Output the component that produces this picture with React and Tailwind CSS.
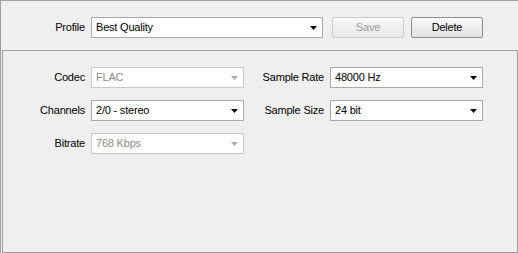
import React from 'react';

function Arrow({ disabled }) {
  return (
    <svg width="7" height="4" viewBox="0 0 7 4" className="shrink-0">
      <path d="M0 0H7L3.5 4Z" fill={disabled ? '#a8a8a8' : '#000'} />
    </svg>
  );
}

function Combo({ value, disabled, width }) {
  return (
    <div
      className={`flex items-center h-[21px] pl-[4px] pr-[5px] border ${
        disabled ? 'border-[#c9c9c9] text-[#8d8d8d]' : 'border-[#a9a9a9] text-black'
      } bg-white ${width}`}
    >
      <span className="flex-1 truncate">{value}</span>
      <Arrow disabled={disabled} />
    </div>
  );
}

function Label({ children, width }) {
  return <div className={`${width} text-right pr-[6px] text-black`}>{children}</div>;
}

export default function App() {
  return (
    <div
      className="w-[518px] h-[253px] bg-[#efefef] border-t border-l border-[#a0a0a0] flex flex-col text-[11px] leading-none tracking-[-0.2px]"
      style={{ fontFamily: '"Liberation Sans", Arial, sans-serif' }}
    >
      <div className="h-[49px] shrink-0 pt-[16px] flex items-start">
        <Label width="w-[90px] h-[21px] flex items-center justify-end">Profile</Label>
        <Combo value="Best Quality" width="w-[232px]" />
        <button className="ml-[9px] w-[72px] h-[21px] rounded-[2px] border border-[#cbcbcb] bg-gradient-to-b from-[#f7f7f7] to-[#e9e9e9] text-[#9d9d9d]">
          Save
        </button>
        <button className="ml-[7px] w-[72px] h-[21px] rounded-[2px] border border-[#8e8e8e] bg-gradient-to-b from-[#fafafa] to-[#e2e2e2] text-black">
          Delete
        </button>
      </div>
      <div className="ml-[1px] flex-1 border border-[#a0a0a0] pt-[16px] flex flex-col gap-[12px]">
        <div className="flex items-center">
          <Label width="w-[88px]">Codec</Label>
          <Combo value="FLAC" disabled width="w-[153px]" />
          <Label width="w-[86px]">Sample Rate</Label>
          <Combo value="48000 Hz" width="w-[153px]" />
        </div>
        <div className="flex items-center">
          <Label width="w-[88px]">Channels</Label>
          <Combo value="2/0 - stereo" width="w-[153px]" />
          <Label width="w-[86px]">Sample Size</Label>
          <Combo value="24 bit" width="w-[153px]" />
        </div>
        <div className="flex items-center">
          <Label width="w-[88px]">Bitrate</Label>
          <Combo value="768 Kbps" disabled width="w-[153px]" />
        </div>
      </div>
    </div>
  );
}
